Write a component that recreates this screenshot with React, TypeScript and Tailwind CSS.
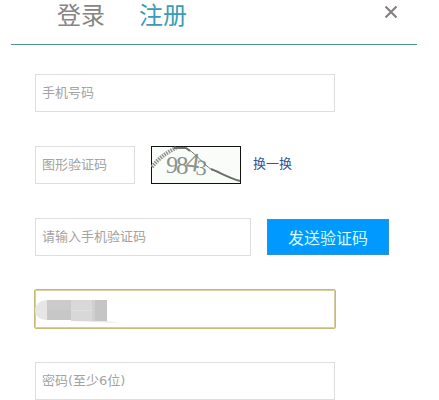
import { useState } from 'react';
import type { InputHTMLAttributes } from 'react';

type Tab = 'login' | 'register';

const tabs: { id: Tab; label: string }[] = [
  { id: 'login', label: '登录' },
  { id: 'register', label: '注册' },
];

interface FieldProps extends InputHTMLAttributes<HTMLInputElement> {
  width: string;
}

function Field({ width, ...rest }: FieldProps) {
  return (
    <input
      {...rest}
      aria-label={rest['aria-label'] ?? rest.placeholder}
      className={`h-[38px] max-w-full border border-[#dedede] bg-white px-1.5 pb-px font-['DejaVu_Sans','Noto_Sans_CJK_SC',sans-serif] text-[13px] text-[#555] placeholder:text-[#a3a3a3] outline-none ${width}`}
    />
  );
}

function Captcha() {
  return (
    <svg viewBox="0 0 90 38" className="h-[38px] w-[90px] flex-shrink-0" role="img" aria-label="图形验证码">
      <rect x="0.5" y="0.5" width="89" height="37" fill="#fafcf9" stroke="#111" />
      <g fill="#8a948c" fontFamily="'Liberation Serif', serif">
        <text x="15" y="27" fontSize="24" transform="rotate(4 21 20)">9</text>
        <text x="25" y="28" fontSize="25">8</text>
        <text x="35" y="25" fontSize="27" transform="rotate(8 41 18)">4</text>
        <text x="45" y="29" fontSize="22" transform="rotate(6 50 22)">3</text>
      </g>
      {/* noise line: hatched on the left, thin in the middle, solid on the right */}
      <path d="M1 21 Q10 9 25 2" fill="none" stroke="#8b918c" strokeWidth="4" strokeDasharray="1.5 1" />
      <path d="M23 2 L35 2 L39 5" fill="none" stroke="#6c756e" strokeWidth="2" />
      <path d="M37 3 C46 9 51 17 61 24" fill="none" stroke="#6f7871" strokeWidth="1" />
      <path d="M60 23 C68 26 78 32 89 35" fill="none" stroke="#68716b" strokeWidth="2" />
    </svg>
  );
}

export default function App() {
  const [tab, setTab] = useState<Tab>('register');
  const [username, setUsername] = useState('');

  return (
    <div className="bg-white font-['Noto_Sans_CJK_SC',sans-serif]">
      {/* Tabs + close */}
      <header className="ml-[11px] mr-[22px] flex h-[45px] items-start justify-between border-b border-[#4f9299] pl-[46px] pr-5">
        <nav className="flex gap-[34px]">
          {tabs.map((t) => (
            <button
              key={t.id}
              type="button"
              onClick={() => setTab(t.id)}
              className={`h-7 cursor-pointer text-2xl leading-7 ${tab === t.id ? 'text-[#3c9cb8]' : 'text-[#858585]'}`}
            >
              {t.label}
            </button>
          ))}
        </nav>
        <button type="button" aria-label="关闭" className="mt-1.5 cursor-pointer text-[#858085]">
          <svg viewBox="0 0 12 12" className="h-3 w-3" stroke="currentColor" strokeWidth="2.2">
            <path d="M0.5 0.5 L11.5 11.5 M11.5 0.5 L0.5 11.5" />
          </svg>
        </button>
      </header>

      <form className="flex flex-col gap-[34px] pl-[35px] pr-4 pt-[29px]" onSubmit={(e) => e.preventDefault()}>
        <Field width="w-[300px]" type="tel" placeholder="手机号码" />

        {/* Image captcha */}
        <div className="flex items-center">
          <Field width="w-[100px]" type="text" placeholder="图形验证码" />
          <div className="ml-4 flex items-center gap-3">
            <Captcha />
            <a href="#captcha" className="pb-1 text-[13px] text-[#2c5796]">换一换</a>
          </div>
        </div>

        {/* SMS code */}
        <div className="flex items-center gap-4">
          <Field width="w-[216px]" type="text" placeholder="请输入手机验证码" />
          <button type="button" className="h-9 w-[122px] cursor-pointer border border-[#2f93d0] bg-[#0099ff] text-base text-[#d5fbff]">
            发送验证码
          </button>
        </div>

        {/* Username, value masked */}
        <div className="relative h-[38px] w-[300px] max-w-full">
          <input
            type="text"
            aria-label="用户名"
            value={username}
            onChange={(e) => setUsername(e.target.value)}
            className="h-full w-full rounded-[1px] border border-[#d8cda0] bg-white px-1.5 text-[13px] outline outline-[#c9b979]"
          />
          <svg viewBox="0 0 86 24" className="pointer-events-none absolute left-0 top-2.5 h-6 w-[86px]" aria-hidden="true">
            <path d="M12 0 C4 1 0 5 0 10 C0 16 4 20 12 20 Z" fill="#e8e5e5" />
            <rect x="12" width="24" height="10" fill="#cbcbcb" />
            <rect x="12" y="10" width="24" height="10" fill="#c7c7c7" />
            <rect x="36" width="24" height="21" fill="#d8d8d8" />
            <rect x="36" y="10" width="24" height="1" fill="#dfdfdf" />
            <rect x="57" width="3" height="21" fill="#d0d0d0" />
            <rect x="60" width="12" height="21" fill="#c5c5c5" />
            <path d="M36 21 L72 21 L86 23 L60 22 Z" fill="#ebe8e8" />
          </svg>
        </div>

        <Field width="w-[300px]" type="password" placeholder="密码(至少6位)" />
      </form>
    </div>
  );
}
